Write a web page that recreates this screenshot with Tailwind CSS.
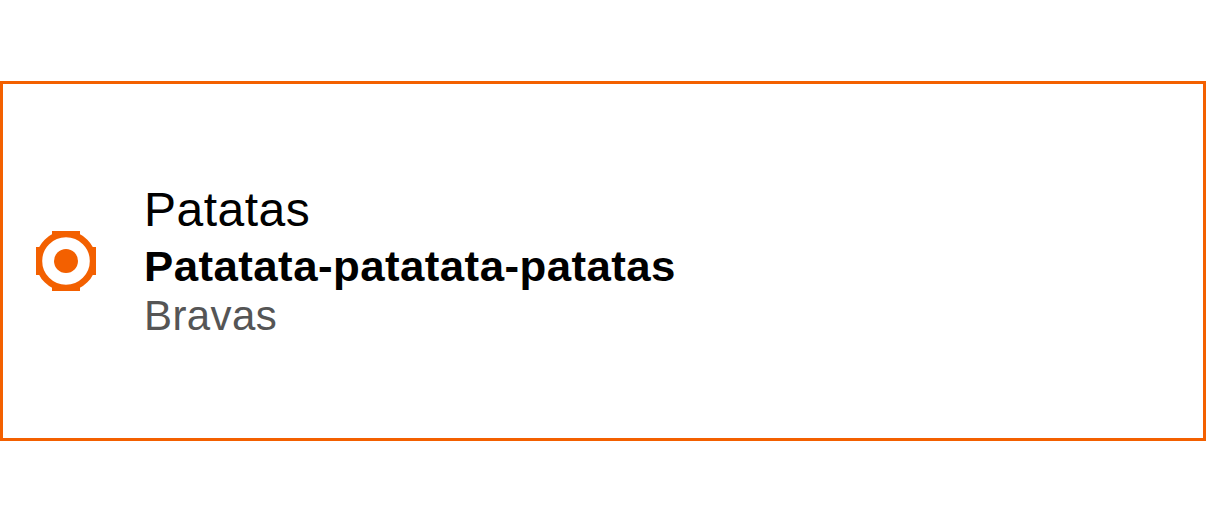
<!DOCTYPE html>
<html lang="en"><head><meta charset="utf-8"><title>Patatas</title><script src="https://cdn.jsdelivr.net/npm/@tailwindcss/browser@4"></script></head>
<body class="bg-white h-[522px] flex items-center overflow-hidden font-['Liberation_Sans',sans-serif]">
<label class="w-full h-[360px] border-3 border-[#f36000] flex items-center pl-[33px] gap-[48px]">
<svg class="size-[60px] shrink-0" viewBox="0 0 60 60" fill="none"><path d="M16 0H44V5H16ZM16 55H44V60H16ZM0 16H5V44H0ZM55 16H60V44H55Z" fill="#f36000"/><circle cx="30" cy="30" r="27" fill="#fff" stroke="#f36000" stroke-width="6.4"/><circle cx="30" cy="30" r="12" fill="#f36000"/></svg>
<span class="flex flex-col whitespace-nowrap">
<span class="text-[48px] leading-[54px] pb-[6px] tracking-[0.5px] text-black">Patatas</span>
<span class="text-[42px] leading-[48px] font-bold tracking-[0.42px] origin-left scale-x-[1.043] text-black">Patatata-patatata-patatas</span>
<span class="text-[42px] leading-[50px] -mb-[2px] tracking-[0.4px] text-[#555]">Bravas</span>
</span></label></body></html>
